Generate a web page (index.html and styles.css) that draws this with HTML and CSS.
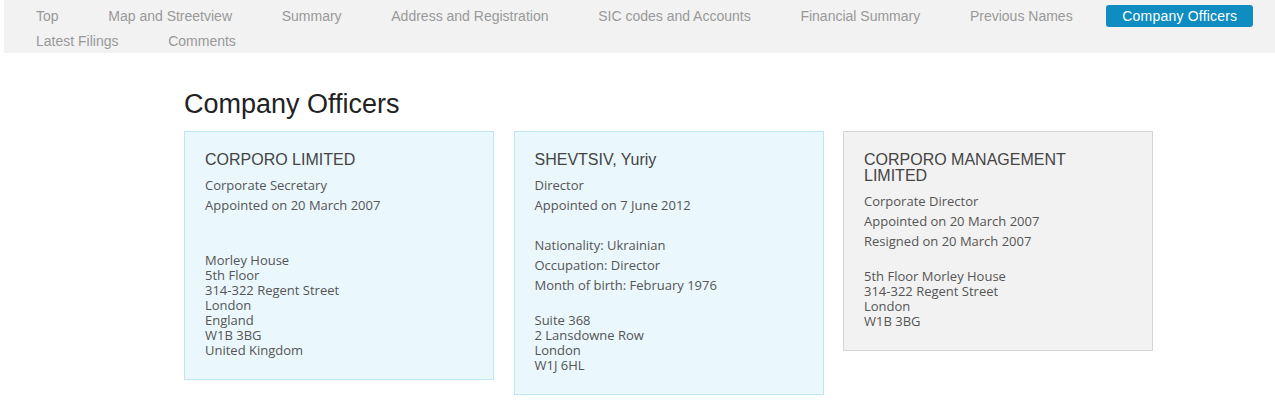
FILE: index.html
```html
<!DOCTYPE html>
<html lang="en">
<head>
<meta charset="utf-8">
<title>Company Officers</title>
<link rel="stylesheet" href="styles.css">
</head>
<body>
<nav class="nav">
  <a class="nav-link" href="#">Top</a>
  <a class="nav-link" href="#">Map and Streetview</a>
  <a class="nav-link" href="#">Summary</a>
  <a class="nav-link" href="#">Address and Registration</a>
  <a class="nav-link" href="#">SIC codes and Accounts</a>
  <a class="nav-link" href="#">Financial Summary</a>
  <a class="nav-link" href="#">Previous Names</a>
  <a class="nav-link active" href="#">Company Officers</a>
  <a class="nav-link" href="#">Latest Filings</a>
  <a class="nav-link" href="#">Comments</a>
</nav>
<main class="content">
  <h1 class="page-title">Company Officers</h1>
  <div class="cards">
    <section class="card card-active">
      <h2 class="card-name">CORPORO LIMITED</h2>
      <div class="roles">
        <div>Corporate Secretary</div>
        <div>Appointed on 20 March 2007</div>
      </div>
      <div class="details"></div>
      <div class="address">
        <div>Morley House</div>
        <div>5th Floor</div>
        <div>314-322 Regent Street</div>
        <div>London</div>
        <div>England</div>
        <div>W1B 3BG</div>
        <div>United Kingdom</div>
      </div>
    </section>
    <section class="card card-active">
      <h2 class="card-name">SHEVTSIV, Yuriy</h2>
      <div class="roles">
        <div>Director</div>
        <div>Appointed on 7 June 2012</div>
      </div>
      <div class="details">
        <div>Nationality: Ukrainian</div>
        <div>Occupation: Director</div>
        <div>Month of birth: February 1976</div>
      </div>
      <div class="address">
        <div>Suite 368</div>
        <div>2 Lansdowne Row</div>
        <div>London</div>
        <div>W1J 6HL</div>
      </div>
    </section>
    <section class="card card-resigned">
      <h2 class="card-name">CORPORO MANAGEMENT LIMITED</h2>
      <div class="roles">
        <div>Corporate Director</div>
        <div>Appointed on 20 March 2007</div>
        <div>Resigned on 20 March 2007</div>
      </div>
      <div class="address">
        <div>5th Floor Morley House</div>
        <div>314-322 Regent Street</div>
        <div>London</div>
        <div>W1B 3BG</div>
      </div>
    </section>
  </div>
</main>
</body>
</html>
```

FILE: styles.css
```css
html, body {
  margin: 0;
  padding: 0;
  background: #ffffff;
}

body {
  font-family: "Liberation Sans", Arial, sans-serif;
  color: #222;
}

.nav {
  margin-left: 4px;
  background: #f2f2f2;
  padding: 5px 0 1px 16px;
  display: flex;
  flex-wrap: wrap;
  row-gap: 3px;
  height: 47px;
  box-sizing: content-box;
}

.nav-link {
  display: block;
  height: 22px;
  line-height: 22px;
  padding: 0 16px;
  margin-right: 17.7px;
  font-size: 14px;
  color: #999999;
  text-decoration: none;
  border-radius: 3px;
}

.nav-link.active {
  background: #0f8dc0;
  color: #ffffff;
  letter-spacing: 0.2px;
}

.content {
  padding-left: 184px;
}

.page-title {
  margin: 36px 0 12px;
  font-size: 27px;
  line-height: 30px;
  font-weight: normal;
  color: #222;
}

.cards {
  display: grid;
  grid-template-columns: repeat(3, 310px);
  column-gap: 19.5px;
  align-items: start;
}

.card {
  box-sizing: border-box;
  padding: 20px 20px 21px;
  border: 1px solid #bfe6f3;
  background: #eaf7fd;
  font-family: "Open Sans", sans-serif;
  font-size: 13px;
  color: #555;
}

.card-resigned {
  background: #f2f2f2;
  border-color: #d5d5d5;
}

.card-name {
  margin: 0 0 7px;
  font-family: "Liberation Sans", Arial, sans-serif;
  font-size: 16px;
  line-height: 16px;
  font-weight: normal;
  color: #444;
}

.roles {
  line-height: 20px;
}

.details {
  padding-top: 20px;
  line-height: 20px;
}

.address {
  margin-top: 18px;
  line-height: 15px;
}
```
